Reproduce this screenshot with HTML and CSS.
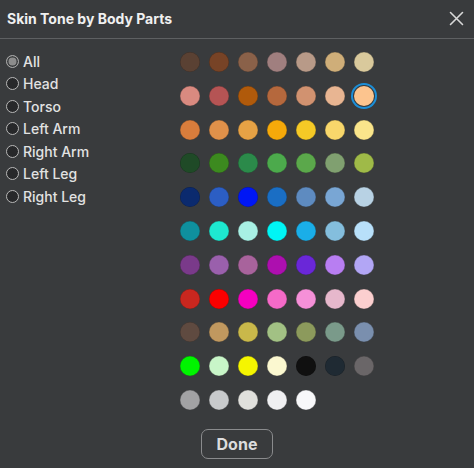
FILE: index.html
```html
<!DOCTYPE html>
<html>
<head>
<meta charset="utf-8">
<link rel="stylesheet" href="styles.css">
</head>
<body>
<div class="dialog">
  <header class="header">
    <h1 class="title">Skin Tone by Body Parts</h1>
    <button class="close" aria-label="Close">
      <svg width="15" height="15" viewBox="0 0 15 15"><path d="M1.5 1.5 L13.5 13.5 M13.5 1.5 L1.5 13.5" stroke="#d8d8d8" stroke-width="1.6" fill="none" stroke-linecap="round"/></svg>
    </button>
  </header>
  <div class="body">
    <ul class="parts">
      <li class="part selected"><span class="radio"></span>All</li>
      <li class="part"><span class="radio"></span>Head</li>
      <li class="part"><span class="radio"></span>Torso</li>
      <li class="part"><span class="radio"></span>Left Arm</li>
      <li class="part"><span class="radio"></span>Right Arm</li>
      <li class="part"><span class="radio"></span>Left Leg</li>
      <li class="part"><span class="radio"></span>Right Leg</li>
    </ul>
    <div class="swatches">
      <span class="sw" style="background:#5a4133"></span>
      <span class="sw" style="background:#774326"></span>
      <span class="sw" style="background:#8a6149"></span>
      <span class="sw" style="background:#a07f7f"></span>
      <span class="sw" style="background:#b89a88"></span>
      <span class="sw" style="background:#cfae79"></span>
      <span class="sw" style="background:#d9c99c"></span>

      <span class="sw" style="background:#d98a80"></span>
      <span class="sw" style="background:#b55454"></span>
      <span class="sw" style="background:#b05a0b"></span>
      <span class="sw" style="background:#b5683d"></span>
      <span class="sw" style="background:#d19270"></span>
      <span class="sw" style="background:#e8b592"></span>
      <span class="sw active" style="background:#fcc48e"></span>

      <span class="sw" style="background:#d97d3c"></span>
      <span class="sw" style="background:#e0914a"></span>
      <span class="sw" style="background:#e6a245"></span>
      <span class="sw" style="background:#f5a90a"></span>
      <span class="sw" style="background:#f5c926"></span>
      <span class="sw" style="background:#f8d76b"></span>
      <span class="sw" style="background:#fae58b"></span>

      <span class="sw" style="background:#1f4a27"></span>
      <span class="sw" style="background:#3c8a1f"></span>
      <span class="sw" style="background:#2b8a4a"></span>
      <span class="sw" style="background:#4caa4c"></span>
      <span class="sw" style="background:#5ba84b"></span>
      <span class="sw" style="background:#80a070"></span>
      <span class="sw" style="background:#9fba48"></span>

      <span class="sw" style="background:#0b2a6e"></span>
      <span class="sw" style="background:#2c5ec4"></span>
      <span class="sw" style="background:#0017f5"></span>
      <span class="sw" style="background:#1a6ec4"></span>
      <span class="sw" style="background:#5e8bc0"></span>
      <span class="sw" style="background:#79a6d4"></span>
      <span class="sw" style="background:#b8d2e4"></span>

      <span class="sw" style="background:#0f909e"></span>
      <span class="sw" style="background:#1ee8d0"></span>
      <span class="sw" style="background:#a8f0e4"></span>
      <span class="sw" style="background:#00f5f5"></span>
      <span class="sw" style="background:#1aaee8"></span>
      <span class="sw" style="background:#84bedd"></span>
      <span class="sw" style="background:#b8e0fa"></span>

      <span class="sw" style="background:#7a3a8a"></span>
      <span class="sw" style="background:#9a60ac"></span>
      <span class="sw" style="background:#a8639c"></span>
      <span class="sw" style="background:#ad0faf"></span>
      <span class="sw" style="background:#6a27d8"></span>
      <span class="sw" style="background:#b87ef2"></span>
      <span class="sw" style="background:#b2a6f5"></span>

      <span class="sw" style="background:#c9271f"></span>
      <span class="sw" style="background:#fb0000"></span>
      <span class="sw" style="background:#f500c0"></span>
      <span class="sw" style="background:#f56ac8"></span>
      <span class="sw" style="background:#f590d8"></span>
      <span class="sw" style="background:#e6b8cc"></span>
      <span class="sw" style="background:#fbcfcf"></span>

      <span class="sw" style="background:#5f4a40"></span>
      <span class="sw" style="background:#c0985f"></span>
      <span class="sw" style="background:#c9b84a"></span>
      <span class="sw" style="background:#a2c184"></span>
      <span class="sw" style="background:#8c9a5c"></span>
      <span class="sw" style="background:#7a9a8a"></span>
      <span class="sw" style="background:#7a8fae"></span>

      <span class="sw" style="background:#00f500"></span>
      <span class="sw" style="background:#c8f5c8"></span>
      <span class="sw" style="background:#f5f500"></span>
      <span class="sw" style="background:#fbf8d0"></span>
      <span class="sw" style="background:#101010"></span>
      <span class="sw" style="background:#1f2a33"></span>
      <span class="sw" style="background:#6a6668"></span>

      <span class="sw" style="background:#a2a2a4"></span>
      <span class="sw" style="background:#c8cacc"></span>
      <span class="sw" style="background:#e0e0dc"></span>
      <span class="sw" style="background:#f0f0f2"></span>
      <span class="sw" style="background:#f8f8fa"></span>
    </div>
  </div>
  <footer class="footer">
    <button class="done">Done</button>
  </footer>
</div>
</body>
</html>
```
FILE: styles.css
```css
* { box-sizing: border-box; }
html, body {
  margin: 0;
  padding: 0;
  background: #393b3d;
}
body {
  font-family: Inter, "Open Sans", "Liberation Sans", sans-serif;
  color: #e4e4e4;
  width: 474px;
  height: 468px;
  overflow: hidden;
}
.dialog {
  display: flex;
  flex-direction: column;
}
.header {
  height: 39px;
  display: flex;
  align-items: center;
  justify-content: space-between;
  padding: 0 8px 2px 7px;
  border-bottom: 1px solid #5e6062;
}
.title {
  margin: 0;
  font-size: 14px;
  font-weight: 700;
  color: #f0f0f0;
}
.close {
  background: none;
  border: 0;
  padding: 0;
  width: 16px;
  height: 16px;
  display: flex;
  align-items: center;
  justify-content: center;
  margin-right: 2px;
}
.body {
  display: flex;
  padding-top: 11px;
}
.parts {
  list-style: none;
  margin: 0;
  padding: 0 0 0 6px;
  width: 180px;
}
.part {
  display: flex;
  align-items: center;
  gap: 4px;
  height: 22.5px;
  font-size: 14px;
  font-weight: 500;
  color: #e2e2e2;
}
.radio {
  width: 13px;
  height: 13px;
  border-radius: 50%;
  border: 1.3px solid #b8b8b8;
  background: #27282a;
  flex: none;
}
.part.selected .radio {
  background: #8c8c8c;
  box-shadow: inset 0 0 0 1.5px #393b3d;
  border-color: #a8a8a8;
}
.swatches {
  display: grid;
  grid-template-columns: repeat(7, 20px);
  column-gap: 9px;
  row-gap: 13.8px;
  padding-top: 2px;
}
.sw {
  width: 20px;
  height: 20px;
  border-radius: 50%;
  display: block;
  box-shadow: inset 0 0 0 0.5px rgba(0,0,0,0.25);
}
.sw.active {
  box-shadow: 0 0 0 1px #393b3d, 0 0 0 3px #1c8fd8;
}
.footer {
  display: flex;
  justify-content: center;
  padding-top: 19px;
}
.done {
  width: 72px;
  height: 30px;
  background: transparent;
  border: 1.5px solid #8a8b8d;
  border-radius: 7px;
  color: #dcdcdc;
  font-family: Inter, "Open Sans", "Liberation Sans", sans-serif;
  font-size: 16px;
  font-weight: 700;
  padding: 0;
}
```
